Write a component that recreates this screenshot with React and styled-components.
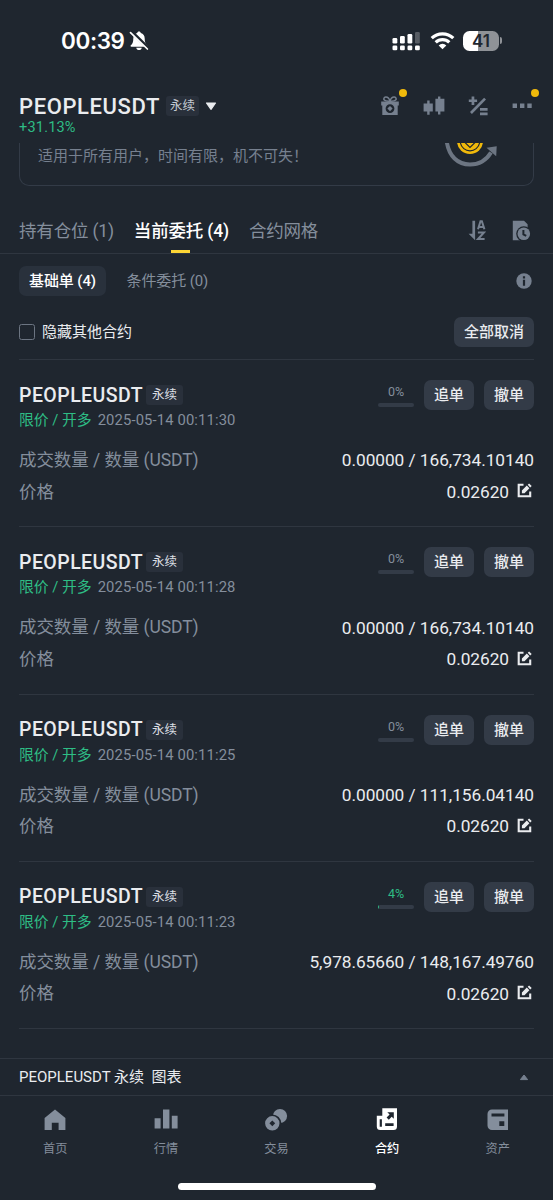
import React from 'react';
import styled, { createGlobalStyle, css } from 'styled-components';

const orders = [
  { id: 1, time: '2025-05-14 00:11:30', filled: '0.00000', total: '166,734.10140', price: '0.02620', percent: 0 },
  { id: 2, time: '2025-05-14 00:11:28', filled: '0.00000', total: '166,734.10140', price: '0.02620', percent: 0 },
  { id: 3, time: '2025-05-14 00:11:25', filled: '0.00000', total: '111,156.04140', price: '0.02620', percent: 0 },
  { id: 4, time: '2025-05-14 00:11:23', filled: '5,978.65660', total: '148,167.49760', price: '0.02620', percent: 4 },
];

const BellOffIcon = () => (
  <svg width="20" height="20" viewBox="0 0 20 20">
    <path d="M10 .6c1 0 1.7.6 1.8 1.5 2.500.7 3.900 2.700 3.900 5.400 0 3.900.8 5.300 2.500 6.800.5.500.3 1.400-.6 1.400H2.400c-.9 0-1.100-.9-.6-1.400C3.500 12.800 4.300 11.400 4.300 7.500c0-2.700 1.400-4.700 3.900-5.400C8.300 1.200 9 .6 10 .6z" fill="#fff" />
    <path d="M7.200 16.700h5.600c-.3 1.400-1.400 2.300-2.800 2.300s-2.500-.9-2.800-2.300z" fill="#fff" />
    <path d="M2.600.8L19.400 17.200" stroke="#1f262f" strokeWidth="3.400" />
    <path d="M1.500 1.600L18.400 18" stroke="#fff" strokeWidth="1.700" strokeLinecap="round" />
  </svg>
);

const SignalIcon = () => (
  <svg width="29" height="20" viewBox="0 0 29 20" fill="#fff">
    <rect x="0.500" y="7" width="4.800" height="5.500" rx="1.300" />
    <rect x="8" y="5" width="4.800" height="7.500" rx="1.300" />
    <rect x="15.500" y="3" width="4.800" height="9.500" rx="1.300" />
    <rect x="23" y="1" width="4.800" height="11.500" rx="1.300" opacity="0.25" />
    <rect x="0.500" y="14.500" width="4.800" height="4.800" rx="1.300" />
    <rect x="8" y="14.500" width="4.800" height="4.800" rx="1.300" />
    <rect x="15.500" y="14.500" width="4.800" height="4.800" rx="1.300" />
    <rect x="23" y="14.500" width="4.800" height="4.800" rx="1.300" />
  </svg>
);

const WifiIcon = () => (
  <svg width="25" height="19" viewBox="0 0 25 19" fill="none" stroke="#fff" strokeWidth="3.200">
    <path d="M1.700 7.200a15.500 15.500 0 0 1 21.600 0" />
    <path d="M5.700 11.400a9.800 9.800 0 0 1 13.600 0" />
    <path d="M12.500 18.300l-3.800-3.900a5.400 5.400 0 0 1 7.600 0z" fill="#fff" stroke="none" />
  </svg>
);

const GiftIcon = () => (
  <svg width="20" height="20" viewBox="0 0 20 20" fill="#76808f">
    <path d="M10 5.200C9.300 2.500 7.600.9 5.700 1 3.900 1.100 3.300 3 4.300 4.100 5.300 5.200 7.500 5.300 10 5.200zM10 5.200C10.700 2.500 12.400.9 14.300 1c1.800.1 2.400 2 1.400 3.100-1 1.100-3.200 1.200-5.700 1.100z" fill="none" stroke="#76808f" strokeWidth="1.500" />
    <path fillRule="evenodd" d="M1.200 5.600h17.600v4h-1.100V19H2.300V9.600H1.200zM10 8.200a4.400 4.400 0 1 0 0 8.800 4.400 4.400 0 0 0 0-8.800z" />
    <path d="M10 10l2.600 2.600-2.600 2.600-2.600-2.600z" />
  </svg>
);

const CandleIcon = () => (
  <svg width="22" height="20" viewBox="0 0 22 20" fill="#76808f">
    <path d="M4.200 4.600h2.400v3h3.200v8H6.600v3.200H4.200v-3.200H.6v-8h3.600zM15 .4h2.400v2.400h4v12.800h-4v3H15v-3h-2.600V2.800H15z" />
  </svg>
);

const CalcIcon = () => (
  <svg width="20" height="20" viewBox="0 0 20 20" fill="#76808f">
    <path d="M3.600.6h2.700v2.800h2.800v2.700H6.300v2.800H3.600V6.100H.8V3.400h2.800z" />
    <path d="M16.100 1.700L18 3.600 3.900 17.900 2 16z" />
    <path d="M12 12h7.600v2.800H12zM12 16.500h7.600v2.800H12z" />
  </svg>
);

const MoreIcon = () => (
  <svg width="20" height="20" viewBox="0 0 20 20" fill="#76808f">
    <path d="M.6 7.600h4.400v4.400H.6zM8 7.600h4.400v4.400H8zM15.300 7.600h4.400v4.400h-4.400z" />
  </svg>
);

const CoinIcon = () => (
  <svg width="54" height="24" viewBox="0 0 54 24">
    <path d="M2.800-1C5 13 13.500 21.500 26 21.500c9 0 16.300-4.200 21-12" fill="none" stroke="#6c7582" strokeWidth="4" />
    <path d="M42.500 4.800l10.200-1.600-.5 10z" fill="#6c7582" />
    <circle cx="26" cy="-2" r="13" fill="#f0b90b" />
    <g fill="none" stroke="#1f262f" strokeWidth="1.200">
      <path d="M16.400 0a9.800 9.800 0 0 0 19.200 0" />
      <path d="M20.500-1l5.500 5.500L31.500-1" />
    </g>
  </svg>
);

const SortIcon = () => (
  <svg width="18" height="21" viewBox="0 0 18 21" fill="#76808f">
    <path d="M4.400.8h2.700v19.400L.6 13.700h3.800z" />
    <path d="M10 9.300l2.500-8h1.400l2.500 8M11 7h4.400M9.900 12.600h5.900L10 19h6.600" fill="none" stroke="#76808f" strokeWidth="2" />
  </svg>
);

const HistoryIcon = () => (
  <svg width="19" height="21" viewBox="0 0 19 21">
    <path d="M.8.700h11.200l3.600 3.600v4H8v12H.8z" fill="#76808f" />
    <circle cx="11.800" cy="13.800" r="7.600" fill="#1f262f" />
    <circle cx="11.800" cy="13.800" r="6.300" fill="#76808f" />
    <path d="M11.400 10v4.300l2.800 1.600" fill="none" stroke="#1f262f" strokeWidth="2" />
  </svg>
);

const InfoIcon = () => (
  <svg width="16" height="16" viewBox="0 0 16 16">
    <circle cx="8" cy="8" r="7.700" fill="#76808f" />
    <path d="M6.900 3.200h2.200v2.200H6.900zM6.900 6.700h2.200v6H6.900z" fill="#1f262f" />
  </svg>
);

const EditIcon = () => (
  <svg width="15" height="15" viewBox="0 0 15 15">
    <path d="M6.500 1.800H1.700v11.400h11.500V8.600" fill="none" stroke="#eaecef" strokeWidth="2.100" />
    <path d="M4.900 10.200V7.500l4.900-4.900 2.600 2.600-4.900 5zM10.700 1.800L12.100.4l2.600 2.500-1.500 1.500z" fill="#eaecef" />
  </svg>
);

const HomeIcon = () => (
  <svg width="24" height="24" viewBox="0 0 24 24">
    <path d="M12 1.400L22.400 10v12h-6.800v-7.300H8.800V22H1.600V10z" fill="currentColor" />
  </svg>
);

const MarketIcon = () => (
  <svg width="24" height="24" viewBox="0 0 24 24">
    <path d="M.6 10.200h6v10.200h-6zM9 1.400h6.400v19H9zM17.800 7.800h5.800v12.600h-5.800z" fill="currentColor" />
  </svg>
);

const TradeIcon = () => (
  <svg width="24" height="24" viewBox="0 0 24 24">
    <circle cx="16" cy="8" r="7.100" fill="currentColor" />
    <circle cx="8.300" cy="15.400" r="9" fill="#1f262f" />
    <path fillRule="evenodd" d="M8.300 8.100a7.200 7.200 0 1 0 0 14.400 7.200 7.200 0 0 0 0-14.400zm0 4.300l2.900 2.900-2.900 2.900-2.900-2.900z" fill="currentColor" />
  </svg>
);

const FuturesIcon = () => (
  <svg width="24" height="24" viewBox="0 0 24 24">
    <path d="M7.300.300h14.700v18.200a3.500 3.500 0 0 1-3.500 3.500H5.300a3.500 3.500 0 0 1-3.500-3.500V7.700h5.500z" fill="currentColor" />
    <path d="M4.700 11.200h2.200v7.600H4.700zM10.200 15.200h8.400v2.700h-8.400zM12.300 4.300h6.500v6.500l-2.100-2.100-2.900 3-2.200-2.200 3-2.900z" fill="#1f262f" />
  </svg>
);

const WalletIcon = () => (
  <svg width="24" height="24" viewBox="0 0 24 24">
    <path d="M6 1.400h16V22H6a4.500 4.500 0 0 1-4.500-4.500V5.900A4.500 4.500 0 0 1 6 1.400z" fill="currentColor" />
    <path d="M5.500 5.600h12.900v2.900H5.500zM13.300 13.200h5v4.700h-5z" fill="#1f262f" />
  </svg>
);

const navItems = [
  { label: '首页', Icon: HomeIcon },
  { label: '行情', Icon: MarketIcon },
  { label: '交易', Icon: TradeIcon },
  { label: '合约', Icon: FuturesIcon, active: true },
  { label: '资产', Icon: WalletIcon },
];

const Order = ({ order }) => (
  <OrderCard>
    <OrderTop>
      <Symbol>PEOPLEUSDT</Symbol>
      <Tag $list>永续</Tag>
      <Actions>
        <Progress $active={order.percent > 0}>
          {order.percent}%
          <Track>
            <Fill style={{ width: `${order.percent}%` }} />
          </Track>
        </Progress>
        <Button>追单</Button>
        <Button>撤单</Button>
      </Actions>
    </OrderTop>
    <OrderMeta>
      <Side>限价 / 开多</Side>
      <Time>{order.time}</Time>
    </OrderMeta>
    <Row $first>
      <RowLabel>成交数量 / 数量 (USDT)</RowLabel>
      <Value>{order.filled} / {order.total}</Value>
    </Row>
    <Row>
      <RowLabel>价格</RowLabel>
      <Value>
        {order.price}
        <EditIcon />
      </Value>
    </Row>
  </OrderCard>
);

const App = () => {
  return (
    <Screen>
      <GlobalStyle />
      <StatusBar>
        <Clock>00:39</Clock>
        <BellOffIcon />
        <StatusRight>
          <SignalIcon />
          <WifiIcon />
          <Battery>
            <BatteryBody>41</BatteryBody>
            <BatteryTip />
          </Battery>
        </StatusRight>
      </StatusBar>

      <Header>
        <div>
          <PairLine>
            <Pair>PEOPLEUSDT</Pair>
            <Tag>永续</Tag>
            <svg width="12" height="9" viewBox="0 0 12 9">
              <path d="M1.500 1h9L6 7.300z" fill="#eaecef" stroke="#eaecef" strokeWidth="1.200" strokeLinejoin="round" />
            </svg>
          </PairLine>
          <Change>+31.13%</Change>
        </div>
        <Tools>
          <Tool><GiftIcon /><Dot /></Tool>
          <Tool><CandleIcon /></Tool>
          <Tool><CalcIcon /></Tool>
          <Tool><MoreIcon /><Dot /></Tool>
        </Tools>
      </Header>

      <Banner>
        <BannerText>适用于所有用户，时间有限，机不可失！</BannerText>
        <CoinIcon />
      </Banner>

      <Tabs>
        <Tab>持有仓位 (1)</Tab>
        <Tab $active>当前委托 (4)</Tab>
        <Tab>合约网格</Tab>
        <TabTools>
          <SortIcon />
          <HistoryIcon />
        </TabTools>
      </Tabs>

      <SubTabs>
        <SubTab $active>基础单 (4)</SubTab>
        <SubTab>条件委托 (0)</SubTab>
        <InfoIcon />
      </SubTabs>

      <FilterRow>
        <Checkbox />
        <span>隐藏其他合约</span>
        <Button $wide>全部取消</Button>
      </FilterRow>

      <OrderList>
        {orders.map((order) => (
          <Order key={order.id} order={order} />
        ))}
      </OrderList>

      <ChartBar>
        <span>PEOPLEUSDT 永续&nbsp; 图表</span>
        <svg width="10" height="8" viewBox="0 0 10 8">
          <path d="M1.400 6.600L5 2l3.600 4.600z" fill="#76808f" stroke="#76808f" strokeLinejoin="round" />
        </svg>
      </ChartBar>

      <Nav>
        {navItems.map(({ label, Icon, active }) => (
          <NavItem key={label} $active={active}>
            <Icon />
            {label}
          </NavItem>
        ))}
      </Nav>
      <HomeIndicator />
    </Screen>
  );
};

export default App;

const GlobalStyle = createGlobalStyle`
  * {
    box-sizing: border-box;
  }

  body {
    margin: 0;
    background: #1f262f;
  }

  svg {
    display: block;
    flex-shrink: 0;
  }
`

const Screen = styled.div`
  display: flex;
  flex-direction: column;
  width: 553px;
  height: 1200px;
  overflow: hidden;
  background: #1f262f;
  color: #eaecef;
  font-family: Roboto, 'Noto Sans CJK SC', sans-serif;
  white-space: nowrap;
`

const StatusBar = styled.div`
  display: flex;
  align-items: center;
  height: 81px;
  padding: 0 51px 0 61px;
  flex-shrink: 0;
`

const Clock = styled.div`
  width: 68px;
  font-family: Inter, sans-serif;
  font-size: 22.5px;
  font-weight: 600;
  letter-spacing: -0.4px;
  color: #fff;
`

const StatusRight = styled.div`
  display: flex;
  align-items: center;
  gap: 8.5px;
  margin-left: auto;
`

const Battery = styled.div`
  display: flex;
  align-items: center;
  gap: 1px;
`

const BatteryBody = styled.div`
  width: 36px;
  height: 20px;
  border-radius: 6.5px;
  background: linear-gradient(90deg, #fff 41%, #8f9297 41%);
  color: #1f262f;
  font-family: Inter, sans-serif;
  font-size: 17px;
  font-weight: 600;
  line-height: 20px;
  text-align: center;
`

const BatteryTip = styled.div`
  width: 2px;
  height: 7px;
  border-radius: 0 3px 3px 0;
  background: #8f9297;
`

const Header = styled.div`
  display: flex;
  justify-content: space-between;
  height: 62px;
  padding: 13px 20.5px 0 19px;
  flex-shrink: 0;
`

const PairLine = styled.div`
  display: flex;
  align-items: center;
  height: 24px;
`

const Pair = styled.div`
  width: 147px;
  font-size: 22px;
  font-weight: 500;
  letter-spacing: 0.6px;
`

const Tag = styled.div`
  width: 33px;
  height: 20px;
  margin-right: 6px;
  border-radius: 3px;
  background: #29303b;
  color: #c5cad2;
  font-size: 12.5px;
  line-height: 19px;
  text-align: center;

  ${(props) => props.$list && css`
    width: 37px;
    color: #dcdfe4;
  `}
`

const Change = styled.div`
  height: 20px;
  color: #2ebd85;
  font-size: 14.5px;
  line-height: 20px;
  letter-spacing: 0.2px;
`

const Tools = styled.div`
  display: flex;
  gap: 22px;
  height: 24px;
  align-items: center;
`

const Tool = styled.div`
  position: relative;
  display: flex;
  justify-content: center;
  width: 22px;
`

const Dot = styled.div`
  position: absolute;
  top: -7px;
  right: -6px;
  width: 8px;
  height: 8px;
  border-radius: 50%;
  background: #f0b90b;
`

const Banner = styled.div`
  display: flex;
  justify-content: space-between;
  height: 43px;
  margin: 0 19px;
  padding: 0 35px 0 18px;
  border: 1px solid #333b47;
  border-top: none;
  border-radius: 0 0 10px 10px;
  flex-shrink: 0;
`

const BannerText = styled.div`
  color: #76808f;
  font-size: 15px;
  line-height: 26px;
`

const Tabs = styled.div`
  display: flex;
  gap: 20px;
  height: 68px;
  padding: 24px 22px 0 19px;
  border-bottom: 1px solid #2f3640;
  flex-shrink: 0;
`

const Tab = styled.div`
  position: relative;
  height: 43px;
  color: #848e9c;
  font-size: 17.5px;
  line-height: 43px;
  letter-spacing: -0.18px;

  ${(props) => props.$active && css`
    color: #fff;
    font-weight: 500;

    &::after {
      content: '';
      position: absolute;
      bottom: 0;
      left: 50%;
      width: 19px;
      height: 3px;
      margin-left: -10px;
      background: #fcd535;
    }
  `}
`

const TabTools = styled.div`
  display: flex;
  align-items: center;
  gap: 26px;
  height: 41px;
  margin-left: auto;
`

const SubTabs = styled.div`
  display: flex;
  align-items: center;
  gap: 10.5px;
  height: 54px;
  padding: 0 21px 0 19px;
  flex-shrink: 0;

  svg {
    margin-left: auto;
  }
`

const SubTab = styled.div`
  height: 30px;
  padding: 0 10px;
  border-radius: 7px;
  color: #848e9c;
  font-size: 15px;
  line-height: 30px;
  letter-spacing: -0.1px;

  ${(props) => props.$active && css`
    background: #29313c;
    color: #fff;
    font-weight: 500;
  `}
`

const FilterRow = styled.div`
  display: flex;
  align-items: center;
  height: 51px;
  padding: 0 19px 4px;
  font-size: 15px;
  line-height: 20px;
  flex-shrink: 0;
`

const Checkbox = styled.div`
  width: 16px;
  height: 16px;
  margin-right: 7px;
  border: 1px solid #6c7582;
  border-radius: 2.5px;
`

const Button = styled.button`
  width: 50px;
  height: 30px;
  padding: 0;
  border: none;
  border-radius: 7px;
  background: #333b47;
  color: #eaecef;
  font-family: inherit;
  font-size: 15px;
  font-weight: 500;
  line-height: 30px;

  ${(props) => props.$wide && css`
    width: 80px;
    margin-left: auto;
  `}
`

const OrderList = styled.div`
  height: 699px;
  margin: 0 19px;
  border-top: 1px solid #2f3640;
  flex-shrink: 0;
`

const OrderCard = styled.div`
  height: 167.33px;
  padding-top: 20px;
  border-bottom: 1px solid #2f3640;
`

const OrderTop = styled.div`
  display: flex;
  align-items: center;
  height: 30px;
`

const Symbol = styled.div`
  width: 127px;
  font-size: 19.5px;
  font-weight: 500;
  letter-spacing: 0.45px;
`

const Actions = styled.div`
  display: flex;
  gap: 10px;
  margin-left: auto;
`

const Progress = styled.div`
  width: 36px;
  color: ${(props) => (props.$active ? '#2ebd85' : '#848e9c')};
  font-size: 12.5px;
  line-height: 23px;
  text-align: center;
  letter-spacing: -0.2px;
`

const Track = styled.div`
  height: 4px;
  border-radius: 2px;
  background: #333b47;
  overflow: hidden;
`

const Fill = styled.div`
  height: 100%;
  background: #2ebd85;
`

const OrderMeta = styled.div`
  display: flex;
  gap: 6px;
  height: 22px;
  font-size: 14.8px;
  line-height: 21px;
`

const Side = styled.div`
  color: #2ebd85;
`

const Time = styled.div`
  color: #848e9c;
  letter-spacing: 0.13px;
`

const Row = styled.div`
  display: flex;
  justify-content: space-between;
  height: 31.5px;
  margin-top: ${(props) => (props.$first ? '13px' : '0')};
  font-size: 17.5px;
  line-height: 31px;
`

const RowLabel = styled.div`
  color: #848e9c;
  letter-spacing: -0.07px;
`

const Value = styled.div`
  display: flex;
  align-items: center;
  font-size: 17.3px;
  letter-spacing: -0.05px;
  white-space: pre;

  svg {
    margin: -3px 2px 0 8px;
  }
`

const ChartBar = styled.div`
  display: flex;
  align-items: center;
  justify-content: space-between;
  height: 38px;
  padding: 0 24px 0 19px;
  border-top: 1px solid #2f3640;
  border-bottom: 1px solid #2f3640;
  font-size: 15px;
  line-height: 38px;
  flex-shrink: 0;

  span {
    height: 38px;
  }
`

const Nav = styled.div`
  display: flex;
  height: 87px;
  padding-top: 12px;
  flex-shrink: 0;
`

const NavItem = styled.div`
  display: flex;
  flex: 1;
  flex-direction: column;
  align-items: center;
  gap: 7px;
  color: ${(props) => (props.$active ? '#fff' : '#848e9c')};
  font-size: 12.2px;
  font-weight: ${(props) => (props.$active ? 500 : 400)};
  line-height: 20px;
`

const HomeIndicator = styled.div`
  width: 198px;
  height: 7px;
  margin: 0 auto;
  border-radius: 4px;
  background: #fff;
  flex-shrink: 0;
`
